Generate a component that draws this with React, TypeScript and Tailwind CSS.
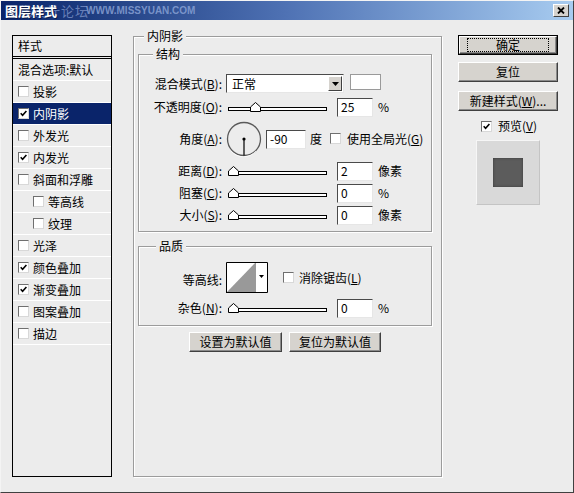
import React from "react";

const font = "font-['Noto_Sans_CJK_SC',sans-serif]";

function Check({ checked }: { checked?: boolean }) {
  return (
    <span className="inline-flex h-[11px] w-[11px] shrink-0 items-center justify-center border border-t-[#6f6f6f] border-l-[#6f6f6f] border-b-[#d8d8d8] border-r-[#d8d8d8] bg-white">
      {checked && (
        <svg width="7" height="7" viewBox="0 0 7 7">
          <path d="M0.7 3.2 L2.6 5.2 L6.4 1" stroke="black" strokeWidth="1.6" fill="none" />
        </svg>
      )}
    </span>
  );
}

function Slider({ value }: { value: number }) {
  return (
    <div className="relative ml-[6px] h-[12px] w-[99px] shrink-0">
      <div className="absolute left-0 right-0 top-[6px] h-[4px] border border-black bg-white" />
      <svg
        className="absolute top-[1px]"
        style={{ left: `${(value / 100) * 88}px` }}
        width="11"
        height="10"
        viewBox="0 0 11 10"
      >
        <path d="M0.5 9.5 V5 L5.5 0.5 L10.5 5 V9.5 Z" fill="white" stroke="black" />
      </svg>
    </div>
  );
}

function Field({ v, className = "" }: { v: string; className?: string }) {
  return (
    <div
      className={`flex h-[19px] shrink-0 items-center border border-t-[#4a4a4a] border-l-[#4a4a4a] border-b-[#e6e6e6] border-r-[#e6e6e6] bg-white pl-[3px] ${className}`}
    >
      {v}
    </div>
  );
}

function Btn({ children, className = "" }: { children: React.ReactNode; className?: string }) {
  return (
    <div
      className={`flex items-center justify-center border border-t-white border-l-white border-b-[#404040] border-r-[#404040] bg-[#d6d3ce] shadow-[inset_-1px_-1px_0_#8a8a8a] ${className}`}
    >
      {children}
    </div>
  );
}

function Group({
  label,
  labelLeft,
  className = "",
  children,
}: {
  label: string;
  labelLeft: string;
  className?: string;
  children?: React.ReactNode;
}) {
  return (
    <div className={`relative border border-[#9c9c9c] shadow-[1px_1px_0_#ffffff,inset_1px_1px_0_#ffffff] ${className}`}>
      <span className={`absolute top-[-9px] bg-[#ececec] px-[3px] leading-[16px] ${labelLeft}`}>{label}</span>
      {children}
    </div>
  );
}

function Label({ children }: { children: React.ReactNode }) {
  return <div className="w-[83px] shrink-0 text-right">{children}</div>;
}

const styles: { name: string; checked?: boolean; indent?: boolean; selected?: boolean }[] = [
  { name: "投影" },
  { name: "内阴影", checked: true, selected: true },
  { name: "外发光" },
  { name: "内发光", checked: true },
  { name: "斜面和浮雕" },
  { name: "等高线", indent: true },
  { name: "纹理", indent: true },
  { name: "光泽" },
  { name: "颜色叠加", checked: true },
  { name: "渐变叠加", checked: true },
  { name: "图案叠加" },
  { name: "描边" },
];

export default function App() {
  return (
    <div
      className={`h-[493px] w-[574px] overflow-hidden border border-t-[#f4f4f4] border-l-[#f4f4f4] border-b-[#404040] border-r-[#404040] bg-[#ececec] text-[12px] leading-none text-black ${font}`}
    >
      {/* title bar */}
      <div className="relative h-[19px] bg-linear-to-r from-[#0a246a] via-[#4f72b4] to-[#a8ccf0]">
        <span className="absolute left-[4px] top-[1px] text-[13px] leading-[17px] tracking-[1px] text-[#7d93c8]/80">
          思缘设计论坛
        </span>
        <span className="absolute left-[85px] top-[4px] font-['Liberation_Sans',sans-serif] text-[10px] font-bold leading-[12px] text-[#8ea6d8]/80">
          WWW.MISSYUAN.COM
        </span>
        <span className="absolute left-[4px] top-[1px] text-[13px] font-bold leading-[17px] text-white [text-shadow:1px_1px_0_#0a1a4a]">
          图层样式
        </span>
        <div className="absolute right-[4px] top-[3px] flex h-[13px] w-[16px] items-center justify-center border border-t-white border-l-white border-b-[#404040] border-r-[#404040] bg-[#d6d3ce]">
          <svg width="8" height="7" viewBox="0 0 8 7">
            <path d="M1 0.5 L7 6.5 M7 0.5 L1 6.5" stroke="black" strokeWidth="1.8" />
          </svg>
        </div>
      </div>

      {/* body */}
      <div className="flex items-start pl-[11px] pt-[15px]">
        {/* styles list */}
        <div className="h-[442px] w-[100px] shrink-0 border border-black">
          <div className="flex h-[23px] items-center border-b-[3px] border-double border-black pl-[5px]">样式</div>
          <div className="flex h-[22px] items-center border-b border-white pl-[5px]">混合选项:默认</div>
          {styles.map((s) => (
            <div
              key={s.name}
              className={`flex h-[22px] items-center gap-[4px] border-b border-white ${s.indent ? "pl-[20px]" : "pl-[5px]"} ${
                s.selected ? "bg-[#0a246a] text-white" : ""
              }`}
            >
              <Check checked={s.checked} />
              <span>{s.name}</span>
            </div>
          ))}
        </div>

        {/* middle */}
        <Group label="内阴影" labelLeft="left-[10px]" className="ml-[21px] mt-[1px] h-[441px] w-[309px] shrink-0">
          <div className="flex flex-col pl-[4px] pt-[17px]">
            <Group label="结构" labelLeft="left-[14px]" className="h-[178px] w-[294px]">
              <div className="flex flex-col pt-[19px]">
                <div className="flex h-[20px] items-start">
                  <Label>
                    <span className="leading-[19px]">
                      混合模式(<u>B</u>):
                    </span>
                  </Label>
                  <div className="ml-[4px] flex h-[19px] w-[118px] items-center justify-between border border-t-[#4a4a4a] border-l-[#4a4a4a] border-b-[#e6e6e6] border-r-[#e6e6e6] bg-white pl-[5px] pr-[1px]">
                    <span>正常</span>
                    <div className="flex h-[15px] w-[14px] items-center justify-center border border-t-white border-l-white border-b-[#404040] border-r-[#404040] bg-[#d6d3ce]">
                      <svg width="7" height="4" viewBox="0 0 7 4">
                        <path d="M0 0 H7 L3.5 4 Z" fill="black" />
                      </svg>
                    </div>
                  </div>
                  <div className="ml-[6px] h-[16px] w-[31px] border border-[#9a9a9a] bg-white" />
                </div>

                <div className="mt-[3px] flex h-[20px] items-center">
                  <Label>
                    不透明度(<u>O</u>):
                  </Label>
                  <Slider value={25} />
                  <Field v="25" className="ml-[10px] w-[36px]" />
                  <span className="ml-[5px]">%</span>
                </div>

                <div className="mt-[4px] flex h-[36px] items-center">
                  <Label>
                    角度(<u>A</u>):
                  </Label>
                  <svg className="ml-[4px] shrink-0" width="36" height="36" viewBox="0 0 36 36">
                    <circle cx="18" cy="18" r="16.5" fill="#ececec" stroke="#5a5a5a" strokeWidth="1.3" />
                    <path d="M5 30 A16.5 16.5 0 0 0 30 30" stroke="#ffffff" strokeWidth="0.8" fill="none" />
                    <circle cx="18" cy="18" r="1.6" fill="black" />
                    <path d="M18 18 V34.5" stroke="black" strokeWidth="1.2" />
                  </svg>
                  <Field v="-90" className="ml-[4px] w-[40px]" />
                  <span className="ml-[4px]">度</span>
                  <span className="ml-[8px]">
                    <Check />
                  </span>
                  <span className="ml-[6px]">
                    使用全局光(<u>G</u>)
                  </span>
                </div>

                <div className="mt-[4px] flex h-[20px] items-center">
                  <Label>
                    距离(<u>D</u>):
                  </Label>
                  <Slider value={0} />
                  <Field v="2" className="ml-[10px] w-[36px]" />
                  <span className="ml-[5px]">像素</span>
                </div>

                <div className="mt-[2px] flex h-[20px] items-center">
                  <Label>
                    阻塞(<u>C</u>):
                  </Label>
                  <Slider value={0} />
                  <Field v="0" className="ml-[10px] w-[36px]" />
                  <span className="ml-[5px]">%</span>
                </div>

                <div className="mt-[2px] flex h-[20px] items-center">
                  <Label>
                    大小(<u>S</u>):
                  </Label>
                  <Slider value={0} />
                  <Field v="0" className="ml-[10px] w-[36px]" />
                  <span className="ml-[5px]">像素</span>
                </div>
              </div>
            </Group>

            <Group label="品质" labelLeft="left-[17px]" className="mt-[14px] h-[80px] w-[294px]">
              <div className="flex flex-col pt-[15px]">
                <div className="flex h-[31px] items-center">
                  <Label>
                    <span className="relative top-[2px]">等高线:</span>
                  </Label>
                  <svg className="ml-[4px] shrink-0" width="42" height="31" viewBox="0 0 42 31">
                    <rect x="0" y="0" width="42" height="31" fill="white" />
                    <path d="M1 30 L29 1 V30 Z" fill="#999999" />
                    <path d="M29.5 0 V31" stroke="#9a9a9a" />
                    <path d="M0.5 31 V0.5 H41.5 V30.5 H0.5" stroke="black" fill="none" />
                    <path d="M33 13 H38 L35.5 16 Z" fill="black" />
                  </svg>
                  <span className="ml-[15px]">
                    <Check />
                  </span>
                  <span className="ml-[5px]">
                    消除锯齿(<u>L</u>)
                  </span>
                </div>
                <div className="mt-[5px] flex h-[20px] items-center">
                  <Label>
                    杂色(<u>N</u>):
                  </Label>
                  <Slider value={0} />
                  <Field v="0" className="ml-[10px] w-[36px]" />
                  <span className="ml-[5px]">%</span>
                </div>
              </div>
            </Group>

            <div className="mt-[6px] flex pl-[51px]">
              <Btn className="h-[20px] w-[93px]">设置为默认值</Btn>
              <Btn className="ml-[7px] h-[20px] w-[92px]">复位为默认值</Btn>
            </div>
          </div>
        </Group>

        {/* right column */}
        <div className="ml-[16px] flex w-[100px] shrink-0 flex-col items-center">
          <div className="w-[100px] border border-black">
            <Btn className="h-[18px] w-full">
              <span className="border border-dotted border-black px-[28px] leading-[12px]">确定</span>
            </Btn>
          </div>
          <Btn className="mt-[7px] h-[20px] w-[100px]">复位</Btn>
          <Btn className="mt-[9px] h-[20px] w-[100px]">
            新建样式(<u>W</u>)...
          </Btn>
          <div className="mt-[9px] flex h-[12px] items-center gap-[6px] pl-[2px]">
            <Check checked />
            <span>
              预览(<u>V</u>)
            </span>
          </div>
          <div className="mt-[8px] flex h-[65px] w-[64px] items-center justify-center border border-t-[#f6f6f6] border-l-[#f6f6f6] border-b-[#c4c4c4] border-r-[#c4c4c4] bg-[#d9d9d9]">
            <div className="h-[29px] w-[30px] bg-[#5c5c5c] shadow-[inset_0_0_3px_#3a3a3a]" />
          </div>
        </div>
      </div>
    </div>
  );
}
